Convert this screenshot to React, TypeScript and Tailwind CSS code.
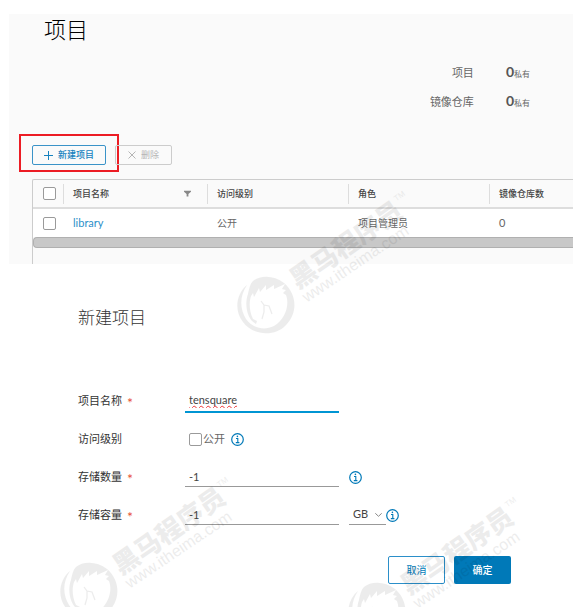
import type { ReactNode } from "react";

const fontStack = "font-['Lato','Noto_Sans_CJK_SC',sans-serif]";

function Info({ label }: { label: string }) {
  return (
    <button type="button" aria-label={label} className="shrink-0 text-[#0079b8]">
      <svg viewBox="0 0 13 13" className="block h-[13px] w-[13px]" fill="none" stroke="currentColor">
        <circle cx="6.5" cy="6.5" r="5.8" strokeWidth="1.2" />
        <path d="M5 5.5h1.8v4M4.8 9.6h3.6" strokeWidth="1.1" />
        <circle cx="6.4" cy="3.4" r="0.8" fill="currentColor" stroke="none" />
      </svg>
    </button>
  );
}

function Check({ label, id }: { label?: string; id?: string }) {
  return (
    <input
      id={id}
      type="checkbox"
      aria-label={label}
      className="block h-[13px] w-[13px] shrink-0 appearance-none rounded-[2px] border border-[#9a9a9a] bg-white checked:bg-[#0079b8]"
    />
  );
}

function Stat({ name }: { name: string }) {
  return (
    <div className="flex h-[29px] items-center">
      <dt className="w-24 text-right text-[11px]">{name}</dt>
      <dd className="ml-8 flex items-baseline pb-1">
        <span className="text-[14px] font-bold text-[#555]">0</span>
        <span className="text-[8px]">私有</span>
      </dd>
    </div>
  );
}

function HeaderCell({ children, filter }: { children: ReactNode; filter?: boolean }) {
  return (
    <th className="h-7 p-0 text-left text-[9px] font-medium text-[#444]">
      <div className="flex h-5 items-center justify-between border-l border-[#ddd] pr-4 pl-[9px]">
        {children}
        {filter && (
          <button type="button" aria-label="筛选">
            <svg viewBox="0 0 7 7" className="h-[7px] w-[7px]" fill="#888">
              <path d="M0 .8h7v1L4.4 4v2.6H2.6V4L0 1.8z" />
            </svg>
          </button>
        )}
      </div>
    </th>
  );
}

function Row({ label, htmlFor, required, children }: { label: string; htmlFor: string; required?: boolean; children: ReactNode }) {
  return (
    <div className="flex h-[38px] items-center">
      <label htmlFor={htmlFor} className="flex w-[107px] shrink-0 items-center text-[11px] text-[#333]">
        {label}
        {required && <span className="ml-[5px] h-3 text-[14px] leading-4 text-[#e8503a]">*</span>}
      </label>
      {children}
    </div>
  );
}

function Watermark({ x, y }: { x: number; y: number }) {
  return (
    <g transform={`translate(${x} ${y})`}>
      <path d="M-19-20C-30-11-32 6-23 17C-13 31 9 32 20 20C32 8 31-11 18-22C8-30-6-30-13-24C-16-21-17-16-18-11C-21-3-20 9-14 16L-10 19L-9 16L-13 14C-17 6-17-3-15-9L-13-12L-12-8L-7-17L-6-13L0-20L0-15L8-20L8-16L19-21L16-16L20-15L17-12L20-10C24 0 19 15 8 21C-2 26-14 23-20 14C-26 4-27-8-19-20Z" />
      <path d="M-5-4L-2 0L3 1L6 9M-2 0V7L-4 14" fill="none" stroke="#000" strokeWidth="1.2" />
      <g transform="rotate(-35)">
        <text x="35" y="6" className="font-['Noto_Sans_CJK_SC',sans-serif] text-[26px] font-black">黑马程序员</text>
        <text x="166" y="-10" className="font-['Liberation_Sans',sans-serif] text-[8px]">TM</text>
      </g>
      <text x="35" y="21" transform="rotate(-34)" className="font-['Liberation_Sans',sans-serif] text-[16px]">www.itheima.com</text>
    </g>
  );
}

export default function App() {
  return (
    <main className={`relative min-h-screen overflow-hidden bg-white text-[#666] ${fontStack}`}>
      <section className="mx-[9px] mt-[14px] bg-[#fafafa]">
        <h1 className="pl-[35px] text-[22px] leading-8 font-light text-black">项目</h1>
        <dl className="mt-[13px] mr-[43px] flex flex-col items-end">
          <Stat name="项目" />
          <Stat name="镜像仓库" />
        </dl>
        <div className="mt-[17px] ml-[10px] flex">
          <div className="flex h-[38px] w-[100px] items-center border-2 border-[#ec1c24] pt-1 pl-[11px]">
            <button type="button" className="flex h-5 w-[74px] items-center justify-center gap-[5px] rounded-[2px] border border-[#3a93c8] text-[9px] font-medium text-[#1682bf]">
              <svg viewBox="0 0 9 9" className="h-[9px] w-[9px]" stroke="currentColor"><path d="M4.5 0v9M0 4.5h9" /></svg>
              新建项目
            </button>
          </div>
          <div className="-ml-[4px] flex items-center pt-1">
            <button type="button" disabled className="flex h-5 w-[57px] items-center justify-center gap-[5px] rounded-[2px] border border-[#ccc] text-[9px] text-[#b5b5b5]">
              <svg viewBox="0 0 8 8" className="h-2 w-2" stroke="currentColor"><path d="M.5.5l7 7M7.5.5l-7 7" /></svg>
              删除
            </button>
          </div>
        </div>
        <div className="mt-[7px] ml-[23px] rounded-tl-[2px] border-t border-l border-[#ccc]">
          <table className="w-full table-fixed border-collapse">
            <colgroup>
              <col className="w-[30px]" />
              <col className="w-[144px]" />
              <col className="w-[141px]" />
              <col className="w-[141px]" />
              <col />
            </colgroup>
            <thead>
              <tr className="border-b-2 border-[#ddd]">
                <th className="h-7 p-0 pl-[10px]"><Check label="全选" /></th>
                <HeaderCell filter>项目名称</HeaderCell>
                <HeaderCell>访问级别</HeaderCell>
                <HeaderCell>角色</HeaderCell>
                <HeaderCell>镜像仓库数</HeaderCell>
              </tr>
            </thead>
            <tbody>
              <tr className="h-[29px] bg-white text-[10px]">
                <td className="p-0 pl-[10px]"><Check label="library" /></td>
                <td className="p-0 pl-[10px] text-[11px]"><a href="#library" className="text-[#2b8fc9]">library</a></td>
                <td className="p-0 pl-[10px]">公开</td>
                <td className="p-0 pl-[10px]">项目管理员</td>
                <td className="p-0 pl-[10px] text-[11px]">0</td>
              </tr>
            </tbody>
          </table>
          <div className="h-[11px] rounded-l-[4px] border-y border-l border-[#b0b0b0] bg-[#c8c8c8]" />
          <div className="h-4" />
        </div>
      </section>

      <form className="pt-[42px] pl-[78px] text-[11px]">
        <h2 className="text-[17px] leading-6 font-light text-[#333]">新建项目</h2>
        <div className="mt-[52px]">
          <Row label="项目名称" htmlFor="name" required>
            <span className="flex h-6 w-[154px] items-center border-b-2 border-[#0095d3]">
              <input id="name" defaultValue="tensquare" spellCheck={false} className="h-4 w-full pl-1 text-[#444] underline decoration-[#e33] decoration-wavy decoration-1 underline-offset-1 outline-none [text-decoration-skip-ink:none]" />
            </span>
          </Row>
          <Row label="访问级别" htmlFor="public">
            <span className="flex items-center pl-1">
              <Check id="public" />
              <label htmlFor="public" className="mr-[6px] ml-[1px]">公开</label>
              <Info label="访问级别说明" />
            </span>
          </Row>
          <Row label="存储数量" htmlFor="count" required>
            <input id="count" defaultValue="-1" className="h-5 w-[154px] border-b border-[#999] pl-1 text-[#444] outline-none" />
            <span className="ml-[10px] flex"><Info label="存储数量说明" /></span>
          </Row>
          <Row label="存储容量" htmlFor="size" required>
            <input id="size" defaultValue="-1" className="h-5 w-[154px] border-b border-[#999] pl-1 text-[#444] outline-none" />
            <span className="ml-[10px] grid h-5 w-[37px] items-center border-b border-[#999]">
              <select aria-label="单位" className="col-start-1 row-start-1 w-full appearance-none bg-transparent pl-1 text-[#444] outline-none">
                <option>GB</option>
                <option>TB</option>
              </select>
              <svg viewBox="0 0 7 4" className="pointer-events-none col-start-1 row-start-1 mr-1 h-1 w-[7px] justify-self-end" fill="none" stroke="#888"><path d="M.3.3l3.2 3L6.7.3" /></svg>
            </span>
            <Info label="存储容量说明" />
          </Row>
        </div>
        <div className="mt-[22px] mr-[71px] flex justify-end gap-[9px] pb-5 text-[10px]">
          <button type="button" className="h-7 w-[57px] rounded-[2px] border border-[#2b8fc9] bg-white text-[#0079b8]">取消</button>
          <button type="submit" className="h-7 w-[57px] rounded-[2px] bg-[#0079b8] font-medium text-white">确定</button>
        </div>
      </form>

      <svg aria-hidden="true" className="pointer-events-none absolute inset-0 h-full w-full opacity-[0.07]">
        <Watermark x={266} y={305} />
        <Watermark x={89} y={591} />
        <Watermark x={377} y={611} />
      </svg>
    </main>
  );
}
